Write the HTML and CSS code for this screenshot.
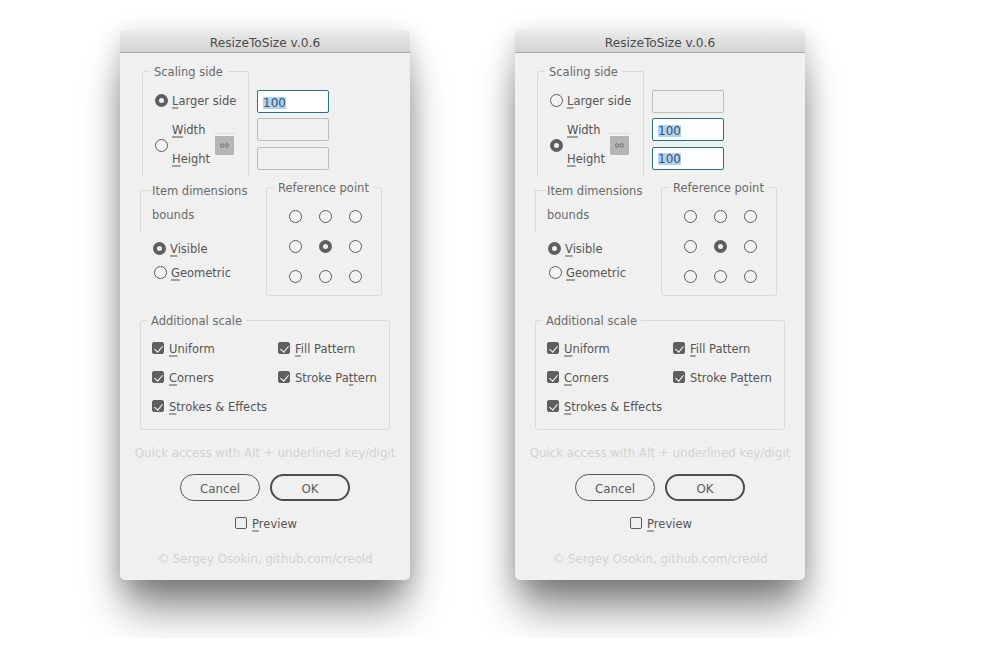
FILE: index.html
```html
<!DOCTYPE html>
<html lang="en">
<head>
<meta charset="utf-8">
<title>ResizeToSize</title>
<link rel="stylesheet" href="styles.css">
</head>
<body>
<main class="stage">
  <section class="dialog">
    <header class="titlebar">ResizeToSize v.0.6</header>
    <div class="top-row">
      <fieldset class="group scaling">
        <legend>Scaling side</legend>
        <div class="side-row"><i class="radio on"></i><span><u>L</u>arger side</span></div>
        <div class="side-row pair">
          <i class="radio low"></i>
          <div class="pair-labels"><span><u>W</u>idth</span><span><u>H</u>eight</span></div>
          <div class="link-wrap"><div class="link-btn"><svg width="9" height="5" viewBox="0 0 9 5"><circle cx="2.2" cy="2.5" r="1.7"/><circle cx="6.8" cy="2.5" r="1.7"/></svg></div></div>
        </div>
      </fieldset>
      <div class="fields">
        <div class="field active"><span class="sel">100</span></div>
        <div class="field"></div>
        <div class="field"></div>
      </div>
    </div>
    <div class="mid-row">
      <div class="dims">
        <div class="dims-head"><p>Item dimensions bounds</p></div>
        <div class="dim-opt"><i class="radio on"></i><span><u>V</u>isible</span></div>
        <div class="dim-opt geo"><i class="radio"></i><span><u>G</u>eometric</span></div>
      </div>
      <fieldset class="group reference">
        <legend>Reference point</legend>
        <div class="ref-grid">
          <i class="radio"></i><i class="radio"></i><i class="radio"></i>
          <i class="radio"></i><i class="radio on"></i><i class="radio"></i>
          <i class="radio"></i><i class="radio"></i><i class="radio"></i>
        </div>
      </fieldset>
    </div>
    <fieldset class="group additional">
      <legend>Additional scale</legend>
      <div class="check-grid">
        <div class="check-row"><i class="check on"></i><span><u>U</u>niform</span></div>
        <div class="check-row"><i class="check on"></i><span><u>F</u>ill Pattern</span></div>
        <div class="check-row"><i class="check on"></i><span><u>C</u>orners</span></div>
        <div class="check-row"><i class="check on"></i><span>Stroke Pa<u>t</u>tern</span></div>
        <div class="check-row"><i class="check on"></i><span><u>S</u>trokes &amp; Effects</span></div>
      </div>
    </fieldset>
    <p class="hint">Quick access with Alt + underlined key/digit</p>
    <div class="buttons">
      <div class="btn">Cancel</div>
      <div class="btn primary">OK</div>
    </div>
    <div class="check-row preview"><i class="check"></i><span><u>P</u>review</span></div>
    <p class="hint copyright">© Sergey Osokin, github.com/creold</p>
  </section>

  <section class="dialog">
    <header class="titlebar">ResizeToSize v.0.6</header>
    <div class="top-row">
      <fieldset class="group scaling">
        <legend>Scaling side</legend>
        <div class="side-row"><i class="radio"></i><span><u>L</u>arger side</span></div>
        <div class="side-row pair">
          <i class="radio on low"></i>
          <div class="pair-labels"><span><u>W</u>idth</span><span><u>H</u>eight</span></div>
          <div class="link-wrap"><div class="link-btn"><svg width="9" height="5" viewBox="0 0 9 5"><circle cx="2.2" cy="2.5" r="1.7"/><circle cx="6.8" cy="2.5" r="1.7"/></svg></div></div>
        </div>
      </fieldset>
      <div class="fields">
        <div class="field"></div>
        <div class="field active"><span class="sel">100</span></div>
        <div class="field active"><span class="sel">100</span></div>
      </div>
    </div>
    <div class="mid-row">
      <div class="dims">
        <div class="dims-head"><p>Item dimensions bounds</p></div>
        <div class="dim-opt"><i class="radio on"></i><span><u>V</u>isible</span></div>
        <div class="dim-opt geo"><i class="radio"></i><span><u>G</u>eometric</span></div>
      </div>
      <fieldset class="group reference">
        <legend>Reference point</legend>
        <div class="ref-grid">
          <i class="radio"></i><i class="radio"></i><i class="radio"></i>
          <i class="radio"></i><i class="radio on"></i><i class="radio"></i>
          <i class="radio"></i><i class="radio"></i><i class="radio"></i>
        </div>
      </fieldset>
    </div>
    <fieldset class="group additional">
      <legend>Additional scale</legend>
      <div class="check-grid">
        <div class="check-row"><i class="check on"></i><span><u>U</u>niform</span></div>
        <div class="check-row"><i class="check on"></i><span><u>F</u>ill Pattern</span></div>
        <div class="check-row"><i class="check on"></i><span><u>C</u>orners</span></div>
        <div class="check-row"><i class="check on"></i><span>Stroke Pa<u>t</u>tern</span></div>
        <div class="check-row"><i class="check on"></i><span><u>S</u>trokes &amp; Effects</span></div>
      </div>
    </fieldset>
    <p class="hint">Quick access with Alt + underlined key/digit</p>
    <div class="buttons">
      <div class="btn">Cancel</div>
      <div class="btn primary">OK</div>
    </div>
    <div class="check-row preview"><i class="check"></i><span><u>P</u>review</span></div>
    <p class="hint copyright">© Sergey Osokin, github.com/creold</p>
  </section>
</main>
</body>
</html>
```
FILE: styles.css
```css
* { box-sizing: border-box; }
html, body { margin: 0; background: #fff; }
body { font: 11.5px/22px "DejaVu Sans", sans-serif; color: #555; }

.stage {
  display: flex;
  gap: 105px;
  height: 638px;
  padding: 30px 0 0 120px;
  overflow: hidden;
}

.dialog {
  flex: none;
  width: 290px;
  height: 550px;
  background: #f0f0f0;
  border-radius: 5px;
  box-shadow: 0 34px 40px -6px rgba(0, 0, 0, .46), 0 6px 26px rgba(0, 0, 0, .2);
}

.titlebar {
  height: 23px;
  font-size: 12.2px;
  line-height: 26px;
  text-align: center;
  color: #4a4a4a;
  background: linear-gradient(#ececec, #d3d3d3);
  border-bottom: 1px solid #a9a9a9;
  border-radius: 5px 5px 0 0;
}

.group {
  margin: 0;
  padding: 0;
  min-width: 0;
  border: 1px solid #dadada;
  border-radius: 3px;
}
.group legend {
  height: 17px;
  padding: 0 4px;
  line-height: 19px;
  color: #6a6a6a;
}

u {
  text-decoration-color: #a0a0a0;
  text-decoration-thickness: 1.5px;
  text-decoration-skip-ink: none;
  text-underline-offset: 2px;
}

.radio {
  flex: none;
  display: block;
  width: 13px;
  height: 13px;
  border: 1px solid #5c5c5c;
  border-radius: 50%;
  background: #f3f3f3;
}
.radio.on { border: 4px solid #5f5f5f; background: #f0f0f0; }
.radio.low { margin-top: 3px; }

.top-row { display: flex; margin: 10px 0 0 22px; height: 114px; }
.scaling { width: 107px; height: 114px; border-bottom: 0; border-radius: 3px 3px 0 0; }
.scaling legend { margin-left: 7px; }
.side-row { display: flex; align-items: center; gap: 4px; height: 20px; margin: 10px 0 0 12px; }
.side-row > span, .pair-labels span, .dim-opt span, .check-row span { display: block; height: 20px; }
.side-row.pair { height: 49px; margin-top: 9px; }
.pair-labels { display: flex; flex-direction: column; gap: 9px; width: 38px; flex: none; }
.link-wrap { flex: none; padding: 2px 1px 0; border-top: 1px solid #dcdcdc; }
.link-btn {
  display: flex;
  align-items: center;
  justify-content: center;
  width: 19px;
  height: 19px;
  background: #b5b5b5;
  border-radius: 1px;
}
.link-btn circle { fill: none; stroke: #666; stroke-width: .9; }

.fields { display: flex; flex-direction: column; gap: 5.4px; margin: 27px 0 0 8px; }
.field {
  width: 72px;
  height: 23px;
  padding-left: 5px;
  font-size: 12px;
  line-height: 23px;
  color: #3d5166;
  border: 1px solid #bdbdbd;
  border-radius: 2px;
}
.field.active { background: #fff; border-color: #2b6f90; }
.sel { display: inline-block; height: 12px; line-height: 13px; background: #b0d2f4; vertical-align: middle; }

.mid-row { display: flex; margin: 2px 0 0 20px; }
.dims { width: 126px; padding-top: 11px; flex: none; }
.dims-head {
  display: flow-root;
  height: 43px;
  padding-left: 11px;
  border-left: 1px solid #dadada;
  background: linear-gradient(#dadada, #dadada) no-repeat 0 0 / 10px 1px;
}
.dims-head p { margin: -11px 0 0; line-height: 24px; color: #6a6a6a; }
.dim-opt { display: flex; align-items: center; gap: 4px; height: 24px; padding-left: 13px; }
.dim-opt:nth-child(2) { margin-top: 3px; }
.dim-opt.geo { padding-left: 14px; }

.reference { width: 116px; height: 117px; }
.reference legend { margin-left: 7px; }
.ref-grid {
  display: grid;
  grid-template-columns: repeat(3, 13px);
  gap: 17px;
  padding: 14px 0 0 22px;
}

.additional { width: 250px; height: 118px; margin: 16px 0 0 20px; }
.additional legend { margin-left: 6px; }
.check-grid {
  display: grid;
  grid-template-columns: 126px 1fr;
  row-gap: 9px;
  padding: 9px 0 0 11px;
}
.check-row { display: flex; align-items: center; gap: 5px; height: 20px; }
.check {
  position: relative;
  flex: none;
  display: block;
  width: 12px;
  height: 12px;
  border: 1px solid #5c5c5c;
  border-radius: 2px;
}
.check.on { background: #5f5f5f; border-color: #5f5f5f; }
.check.on::after {
  content: "";
  position: absolute;
  left: 3px;
  top: 1px;
  width: 4px;
  height: 7px;
  border: solid #fff;
  border-width: 0 1.5px 1.5px 0;
  transform: rotate(40deg);
}

.hint { height: 20px; margin: 12px 0 0; font-size: 11.8px; text-align: center; color: #d2d2d2; white-space: nowrap; }
.buttons { display: flex; justify-content: center; gap: 10px; margin-top: 12px; }
.btn {
  width: 80px;
  height: 27px;
  font-size: 11.8px;
  line-height: 29px;
  text-align: center;
  color: #5c5c5c;
  border: 1px solid #555;
  border-radius: 14px;
}
.btn.primary { border: 2px solid #4c4c4c; line-height: 27px; }
.preview { justify-content: center; margin-top: 12px; padding-left: 2px; }
.copyright { margin-top: 15px; }
```
